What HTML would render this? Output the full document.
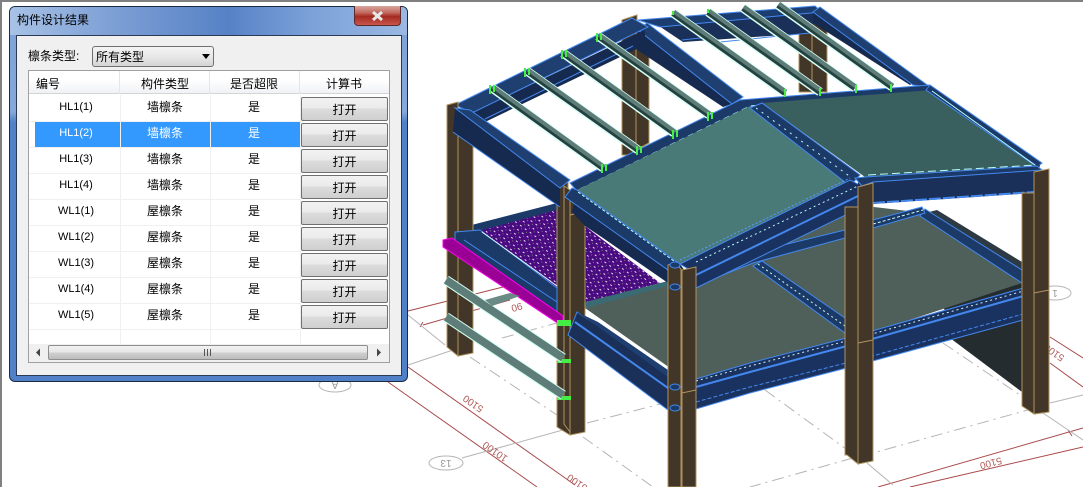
<!DOCTYPE html>
<html><head><meta charset="utf-8"><style>
html,body{margin:0;padding:0;background:#fff}
#p{position:relative;width:1083px;height:487px;overflow:hidden;background:#fff;font-family:"Liberation Sans","WenQuanYi Zen Hei","Noto Sans CJK SC",sans-serif;font-size:12px;color:#000}
#p div{position:absolute;box-sizing:border-box}
svg{position:absolute;left:0;top:0}
.t{text-align:center;line-height:16px;height:16px;white-space:nowrap}
.b{left:301px;width:87px;height:24px;border:1px solid #707070;border-radius:2px;background:linear-gradient(#f2f2f2 0,#ebebeb 45%,#dcdcdc 50%,#cfcfcf 100%);text-align:center;line-height:24px;font-size:12px}
.w{color:#fff}
</style></head><body><div id="p">
<svg width="1083" height="487" viewBox="0 0 1083 487">
<defs>
<pattern id="pu" width="6" height="5" patternUnits="userSpaceOnUse" patternTransform="rotate(36)">
<rect width="6" height="5" fill="#4a0a82"/><rect x="1" y="1" width="2" height="1" fill="#e8e0f0"/><rect x="4" y="3" width="1" height="1" fill="#6a8a70"/></pattern>
</defs>
<g fill="none" stroke="#a84a4a" stroke-width="1">
<path d="M408 367L575 485M388 382L537 487M408 311L503 287M423 325L510 300M878 487L1083 428M910 487L1083 447M1050 337L1083 358M1050 363L1083 387M1068 430l4 6M423 322l-3 5"/>
</g>
<g fill="none" stroke="#b5b5b5" stroke-width="1">
<path d="M408 315L445 345M408 365L453 350M462 458L570 428M1050 403L1083 395M1043 413L1083 440M867 463L893 485"/>
<ellipse cx="335" cy="385" rx="16" ry="7"/><ellipse cx="446" cy="463" rx="17" ry="7"/><ellipse cx="1055" cy="293" rx="16" ry="7"/>
<path stroke-dasharray="12 5 2 5" d="M470 357L560 417M583 437L653 487M587 423L668 402M502 338L557 323M765 390L857 457M943 343L1020 395M1035 408L873 453M853 458L750 487"/>
</g>
<g fill="#b05a5a" font-family="Liberation Sans" font-size="10" text-anchor="middle">
<text transform="translate(475 401) rotate(215)">5100</text>
<text transform="translate(497 449) rotate(215)">10100</text>
<text transform="translate(579 480) rotate(215)">5100</text>
<text transform="translate(990 460) rotate(165)">5100</text>
<text transform="translate(1056 350) rotate(215)">5100</text>
<text transform="translate(516 304) rotate(165)">90</text>
</g>
<g fill="#999" font-family="Liberation Sans" font-size="10" text-anchor="middle">
<text transform="translate(335 382) rotate(180)">A</text>
<text transform="translate(446 460) rotate(180)">13</text>
<text transform="translate(1055 290) rotate(180)">1</text>
</g>

<!-- lower level -->
<polygon points="925,213 1022,272 1022,392 950,338" fill="#252c30"/>
<polygon points="585,308 668,283 857,205 925,213 1022,283 873,332 697,387" fill="#4f5f5a"/>
<polygon points="937,210 1022,262 1022,272 925,213" fill="#2d3a44"/>
<polygon points="925,209 1022,270 1022,283 920,216" fill="#1c3a68" stroke="#4488ee" stroke-width="1"/>
<polygon points="762,261 845,318 845,333 753,266" fill="#1c3a68" stroke="#4488ee" stroke-width="1"/>
<polyline points="758,264 845,326" fill="none" stroke="#cfe" stroke-width="1" stroke-dasharray="2 3"/>
<polygon points="700,272 750,253 845,230 845,238 753,263 705,282" fill="#1c3a68" stroke="#4488ee" stroke-width="1"/>
<polygon points="873,220 922,207 925,213 873,228" fill="#1c3a68" stroke="#4488ee" stroke-width="1"/>
<polyline points="873,224 923,210" fill="none" stroke="#cfe" stroke-dasharray="3 2"/>

<!-- purple deck -->
<polygon points="473,230 557,207 557,290 483,240" fill="url(#pu)"/>
<polygon points="585,226 603,240 660,283 585,303" fill="url(#pu)"/>
<polygon points="460,228 557,203 557,210 475,232" fill="#1c3a68"/>
<polygon points="585,302 668,281 668,286 585,308" fill="#3a6a74"/>

<!-- back columns -->
<polygon points="622,20 637,15 637,155 622,155" fill="#423628" stroke="#b0945f"/>
<polygon points="636,28 649,30 649,143 636,150" fill="#423628" stroke="#b0945f"/>
<polygon points="799,30 812,25 812,92 799,92" fill="#423628" stroke="#b0945f"/>
<polygon points="812,10 827,30 827,92 812,92" fill="#423628" stroke="#b0945f"/>

<!-- back roof beams -->
<polygon points="650,20 815,8 812,33 683,42" fill="#1a3058"/>
<polygon points="638,20 815,6 822,12 660,27" fill="#1c3d70" stroke="#4488ee"/>
<polyline points="682,40 700,38 720,42 810,33" fill="none" stroke="#4488ee"/>
<polygon points="638,30 732,104 723,107 633,47" fill="#16294f"/>
<polygon points="647,23 743,97 732,104 638,30" fill="#1e3f70" stroke="#4488ee"/>
<polygon points="813,12 913,83 910,85 813,23" fill="#16294f"/>
<polygon points="820,7 930,87 913,85 813,12" fill="#1e3f70" stroke="#4488ee"/>

<!-- left rafter -->
<polygon points="472,113 645,30 645,45 485,122" fill="#16294f"/>
<polygon points="455,105 632,18 648,27 472,113" fill="#1e3f70" stroke="#4488ee"/>
<polyline points="485,119 633,46" stroke="#4488ee" fill="none"/>

<!-- eave back & left -->
<polygon points="570,183 740,100 930,85 932,92 762,104 750,107 577,191" fill="#1c3a68" stroke="#4488ee"/>
<polyline points="580,189 750,106 930,91" fill="none" stroke="#bff" stroke-width="1" stroke-dasharray="6 4"/>

<!-- column 1 -->
<polygon points="447,105 458,102 458,356 447,347" fill="#423628" stroke="#b0945f"/>
<polygon points="458,114 473,112 473,353 458,356" fill="#423628" stroke="#b0945f"/>

<!-- purlins roof -->
<g fill="none" stroke-linecap="butt">
<g stroke="#d8fff8" stroke-width="9">
<path d="M492 88L603 168M527 71L638 150M563 53L674 133M598 36L709 115M673 13L785 93M708 12L820 92M743 8L855 88M778 5L892 87"/></g>
<g stroke="#24403f" stroke-width="6">
<path d="M492 88L603 168M527 71L638 150M563 53L674 133M598 36L709 115M673 13L785 93M708 12L820 92M743 8L855 88M778 5L892 87"/></g>
<g stroke="#5e7d78" stroke-width="4" transform="translate(1 -1.4)">
<path d="M492 88L603 168M527 71L638 150M563 53L674 133M598 36L709 115M673 13L785 93M708 12L820 92M743 8L855 88M778 5L892 87"/></g>
<g stroke="#44ee44" stroke-width="2">
<path d="M490 85v9M494 85v7M525 68v9M529 68v7M562 50v9M566 50v7M597 33v9M601 33v7M602 164v9M606 164v7M637 146v9M641 146v7M673 130v9M677 130v7M708 112v9M712 112v7M785 89v8M820 88v8M856 85v8M891 84v8M673 11v4M708 9v4"/></g>
</g>

<!-- roof panels -->
<polygon points="762,103 932,90 1037,166 865,177" fill="#3a5f5f"/>
<polygon points="577,190 750,106 850,180 680,264" fill="#4a7a78"/>

<!-- right edge of roof -->
<polygon points="930,85 1042,163 1037,167 926,90" fill="#1c3a68" stroke="#4488ee"/>
<polyline points="932,91 1035,165" stroke="#bff" fill="none"/>

<!-- column 3 back part -->
<polygon points="557,185 568,182 570,435 557,427" fill="#423628" stroke="#b0945f"/>
<polygon points="564,186 570,190 570,432 564,424" fill="#423628" stroke="#b0945f"/>

<!-- left lower beam top rafter -->
<polygon points="455,108 560,188 560,207 453,132" fill="#16294f"/>
<polyline points="453,132 560,207" fill="none" stroke="#4488ee"/>
<polygon points="470,110 570,180 560,188 455,108" fill="#1e3f70" stroke="#4488ee"/>
<polygon points="455,232 480,230 557,288 557,316 455,250" fill="#1c3a68" stroke="#4488ee"/>
<polyline points="464,240 557,302" fill="none" stroke="#4488ee"/>
<polyline points="482,232 557,286" fill="none" stroke="#dff" stroke-width="1"/>

<!-- column 3 front part -->
<polygon points="570,215 585,212 585,432 570,435" fill="#423628" stroke="#b0945f"/>
<polygon points="570,192 578,190 578,213 570,215" fill="#423628" stroke="#b0945f"/>

<!-- ridge front and front rafters -->
<polygon points="577,190 680,264 695,285 668,283 603,238 585,226 572,212" fill="#16294f"/>
<polygon points="572,188 577,190 680,264 668,270 565,197" fill="#1c3a68" stroke="#4488ee"/>
<polyline points="578,192 678,264" stroke="#bff" fill="none" stroke-dasharray="3 2"/>
<polygon points="750,108 762,103 860,175 850,186" fill="#1c3a68" stroke="#4488ee"/>
<polyline points="756,108 852,178" stroke="#bff" fill="none" stroke-dasharray="2 5"/>
<polygon points="680,264 850,180 862,186 862,207 696,288 690,270" fill="#1a3260" stroke="#4488ee"/>
<polyline points="696,262 858,186" stroke="#bff" fill="none" stroke-dasharray="2 3"/>
<polyline points="696,275 858,196" stroke="#4488ee" stroke-width="2" fill="none"/>
<polyline points="680,260 850,178" stroke="#5a9aff" fill="none" stroke-dasharray="2 2"/>

<!-- right front roof beam -->
<polygon points="858,178 1040,165 1034,193 873,204 858,207" fill="#1a3058"/>
<polygon points="855,178 865,177 1037,166 1042,170 873,182 862,186" fill="#1c3a68" stroke="#4488ee"/>
<polyline points="868,175 1036,165" stroke="#bff" stroke-dasharray="8 4" fill="none"/>
<polyline points="873,203 1034,192" stroke="#4488ee" stroke-width="2" stroke-dasharray="12 2" fill="none"/>

<!-- lower level beams -->
<polygon points="577,312 668,373 668,410 568,335" fill="#1a3058" stroke="#4488ee"/>
<polyline points="575,322 668,388" stroke="#4488ee" stroke-width="2" fill="none"/>
<polygon points="577,312 598,322 668,370 668,377" fill="#1e3f70"/>
<polygon points="696,379 750,363 858,335 1034,285 1034,317 858,365 750,393 696,409" fill="#1a3260" stroke="#4488ee"/>
<polyline points="696,387 750,372 858,343 1034,293" stroke="#4488ee" stroke-width="2" fill="none"/>
<polyline points="696,381 750,366 858,338 1034,288" stroke="#d0eee8" stroke-dasharray="2 3" fill="none"/>
<polyline points="696,402 750,387 858,360 1034,311" stroke="#4488ee" stroke-dasharray="4 2" fill="none"/>

<!-- back columns right lower -->
<polygon points="845,207 858,207 858,464 847,455 845,455" fill="#423628" stroke="#b0945f"/>
<polygon points="1022,193 1034,193 1034,414 1022,406" fill="#423628" stroke="#b0945f"/>

<!-- magenta -->
<polygon points="443,240 452,238 563,316 563,323 556,322 443,247" fill="#9a0095" stroke="#ff00ee"/>
<!-- green clips -->
<g fill="#44ee44"><rect x="557" y="320" width="14" height="6"/><rect x="557" y="359" width="14" height="4"/><rect x="557" y="396" width="14" height="4"/></g>
<!-- wall purlins -->
<g fill="none">
<path d="M446 280L563 358M446 317L563 395" stroke="#d8fff8" stroke-width="10"/>
<path d="M446 280L563 358M446 317L563 395" stroke="#5e7d78" stroke-width="8"/>
<path d="M444 284L561 362M444 321L561 399" stroke="#cfe" stroke-width="1"/>
</g>
<polygon points="485,300 510,293 520,296 492,306" fill="#6a8a85"/>

<!-- front columns -->
<polygon points="668,265 675,263 681,269 681,487 668,487" fill="#423628" stroke="#b0945f"/>
<polygon points="682,270 696,267 696,487 682,487" fill="#423628" stroke="#b0945f"/>
<polygon points="858,187 873,183 873,461 858,464" fill="#423628" stroke="#b0945f"/>
<polygon points="1034,172 1049,169 1049,412 1034,414" fill="#423628" stroke="#b0945f"/>
<g fill="#1c3a68" stroke="#4488ee"><ellipse cx="675" cy="265" rx="5" ry="3"/><ellipse cx="675" cy="287" rx="5" ry="3"/><ellipse cx="675" cy="387" rx="5" ry="3"/><ellipse cx="675" cy="408" rx="5" ry="3"/></g>
<path d="M682 393l14-3M858 343l15-3M1034 293l15-3" stroke="#b0945f" fill="none"/>
<rect x="1" y="0" width="1082" height="2" fill="#808080"/>
<rect x="0" y="0" width="2" height="487" fill="#808080"/>
</svg>

<div style="left:9px;top:6px;width:399px;height:376px;border:1px solid #1c2a40;border-radius:6px;background:linear-gradient(#a8c0e4 0,#7fa3d8 25px,#86a8da 105px,#4f80c8 115px,#4f80c8 100%)"></div>
<div style="left:10px;top:7px;width:397px;height:28px;border-radius:5px 5px 0 0;background:linear-gradient(90deg,#a8c2e6 0,#7ea0d5 25%,#5682c6 55%,#7ba0d8 75%,#9ab8e2 100%)"></div>
<div style="left:354px;top:6px;width:47px;height:20px;border:1px solid #5c2a2a;border-top:none;border-radius:0 0 4px 4px;background:linear-gradient(#d8a8a0 0,#c26a60 35%,#a52a20 55%,#c8564c 100%)"></div>
<svg style="left:354px;top:6px" width="47" height="20" viewBox="0 0 47 20"><path d="M19 6l9 8M28 6l-9 8" stroke="#e8e8e8" stroke-width="3" fill="none"/></svg>
<div class="t" style="left:17px;top:12px;width:80px;text-align:left">构件设计结果</div>

<div style="left:16px;top:35px;width:386px;height:341px;border:1px solid #2a3a55;background:#f0f0f0"></div>
<div class="t" style="left:28px;top:48px;width:60px;text-align:left">檩条类型:</div>
<div style="left:92px;top:46px;width:122px;height:21px;border:1px solid #707070;border-radius:3px;background:linear-gradient(#f4f4f4,#e8e8e8 50%,#d4d4d4)"></div>
<div class="t" style="left:96px;top:49px;width:60px;text-align:left">所有类型</div>
<svg style="left:200px;top:53px" width="12" height="8"><path d="M2 1h8l-4 5z" fill="#000"/></svg>

<div style="left:28px;top:70px;width:362px;height:293px;border:1px solid #a0a0a0;background:#fff"></div>
<div style="left:29px;top:71px;width:360px;height:23px;background:linear-gradient(#fff 0,#fff 40%,#f0f2f5 100%);border-bottom:1px solid #d5d5d5"></div>
<div style="left:119px;top:71px;width:1px;height:23px;background:#e3e5e8"></div>
<div style="left:209px;top:71px;width:1px;height:23px;background:#e3e5e8"></div>
<div style="left:299px;top:71px;width:1px;height:23px;background:#e3e5e8"></div>
<div class="t" style="left:36px;top:76px;width:40px;text-align:left">编号</div>
<div class="t" style="left:125px;top:76px;width:80px">构件类型</div>
<div class="t" style="left:214px;top:76px;width:80px">是否超限</div>
<div class="t" style="left:304px;top:76px;width:80px">计算书</div>

<div style="left:35px;top:122px;width:265px;height:25px;background:#3399ff"></div>
<div style="left:120px;top:95px;width:1px;height:249px;background:#f0f0f0"></div>
<div style="left:210px;top:95px;width:1px;height:249px;background:#f0f0f0"></div>
<div style="left:300px;top:95px;width:1px;height:249px;background:#f0f0f0"></div>
<div style="left:29px;top:121px;width:272px;height:1px;background:#f0f0f0"></div>
<div style="left:29px;top:147px;width:272px;height:1px;background:#f0f0f0"></div>
<div style="left:29px;top:173px;width:272px;height:1px;background:#f0f0f0"></div>
<div style="left:29px;top:199px;width:272px;height:1px;background:#f0f0f0"></div>
<div style="left:29px;top:225px;width:272px;height:1px;background:#f0f0f0"></div>
<div style="left:29px;top:251px;width:272px;height:1px;background:#f0f0f0"></div>
<div style="left:29px;top:277px;width:272px;height:1px;background:#f0f0f0"></div>
<div style="left:29px;top:303px;width:272px;height:1px;background:#f0f0f0"></div>
<div style="left:29px;top:329px;width:272px;height:1px;background:#f0f0f0"></div>

<div class="t" style="left:36px;top:99px;width:80px;font-size:11px">HL1(1)</div><div class="t" style="left:125px;top:99px;width:80px">墙檩条</div><div class="t" style="left:214px;top:99px;width:80px">是</div><div class="b" style="top:97px">打开</div>
<div class="t w" style="left:36px;top:125px;width:80px;font-size:11px">HL1(2)</div><div class="t w" style="left:125px;top:125px;width:80px">墙檩条</div><div class="t w" style="left:214px;top:125px;width:80px">是</div><div class="b" style="top:123px">打开</div>
<div class="t" style="left:36px;top:151px;width:80px;font-size:11px">HL1(3)</div><div class="t" style="left:125px;top:151px;width:80px">墙檩条</div><div class="t" style="left:214px;top:151px;width:80px">是</div><div class="b" style="top:149px">打开</div>
<div class="t" style="left:36px;top:177px;width:80px;font-size:11px">HL1(4)</div><div class="t" style="left:125px;top:177px;width:80px">墙檩条</div><div class="t" style="left:214px;top:177px;width:80px">是</div><div class="b" style="top:175px">打开</div>
<div class="t" style="left:36px;top:203px;width:80px;font-size:11px">WL1(1)</div><div class="t" style="left:125px;top:203px;width:80px">屋檩条</div><div class="t" style="left:214px;top:203px;width:80px">是</div><div class="b" style="top:201px">打开</div>
<div class="t" style="left:36px;top:229px;width:80px;font-size:11px">WL1(2)</div><div class="t" style="left:125px;top:229px;width:80px">屋檩条</div><div class="t" style="left:214px;top:229px;width:80px">是</div><div class="b" style="top:227px">打开</div>
<div class="t" style="left:36px;top:255px;width:80px;font-size:11px">WL1(3)</div><div class="t" style="left:125px;top:255px;width:80px">屋檩条</div><div class="t" style="left:214px;top:255px;width:80px">是</div><div class="b" style="top:253px">打开</div>
<div class="t" style="left:36px;top:281px;width:80px;font-size:11px">WL1(4)</div><div class="t" style="left:125px;top:281px;width:80px">屋檩条</div><div class="t" style="left:214px;top:281px;width:80px">是</div><div class="b" style="top:279px">打开</div>
<div class="t" style="left:36px;top:307px;width:80px;font-size:11px">WL1(5)</div><div class="t" style="left:125px;top:307px;width:80px">屋檩条</div><div class="t" style="left:214px;top:307px;width:80px">是</div><div class="b" style="top:305px">打开</div>

<div style="left:29px;top:344px;width:360px;height:18px;background:#f0f0f0"></div>
<div style="left:48px;top:345px;width:320px;height:15px;border:1px solid #8e8e8e;border-radius:2px;background:linear-gradient(#f2f2f2 0,#e6e6e6 45%,#cfcfcf 55%,#bcbcbc 100%)"></div>
<svg style="left:29px;top:345px" width="360" height="16"><path d="M7 7.5l4-4v8zM348 3.5l4 4-4 4z" fill="#444"/><path d="M175.500 4v7M178.500 4v7M181.500 4v7" stroke="#555"/></svg>
</div></body></html>
